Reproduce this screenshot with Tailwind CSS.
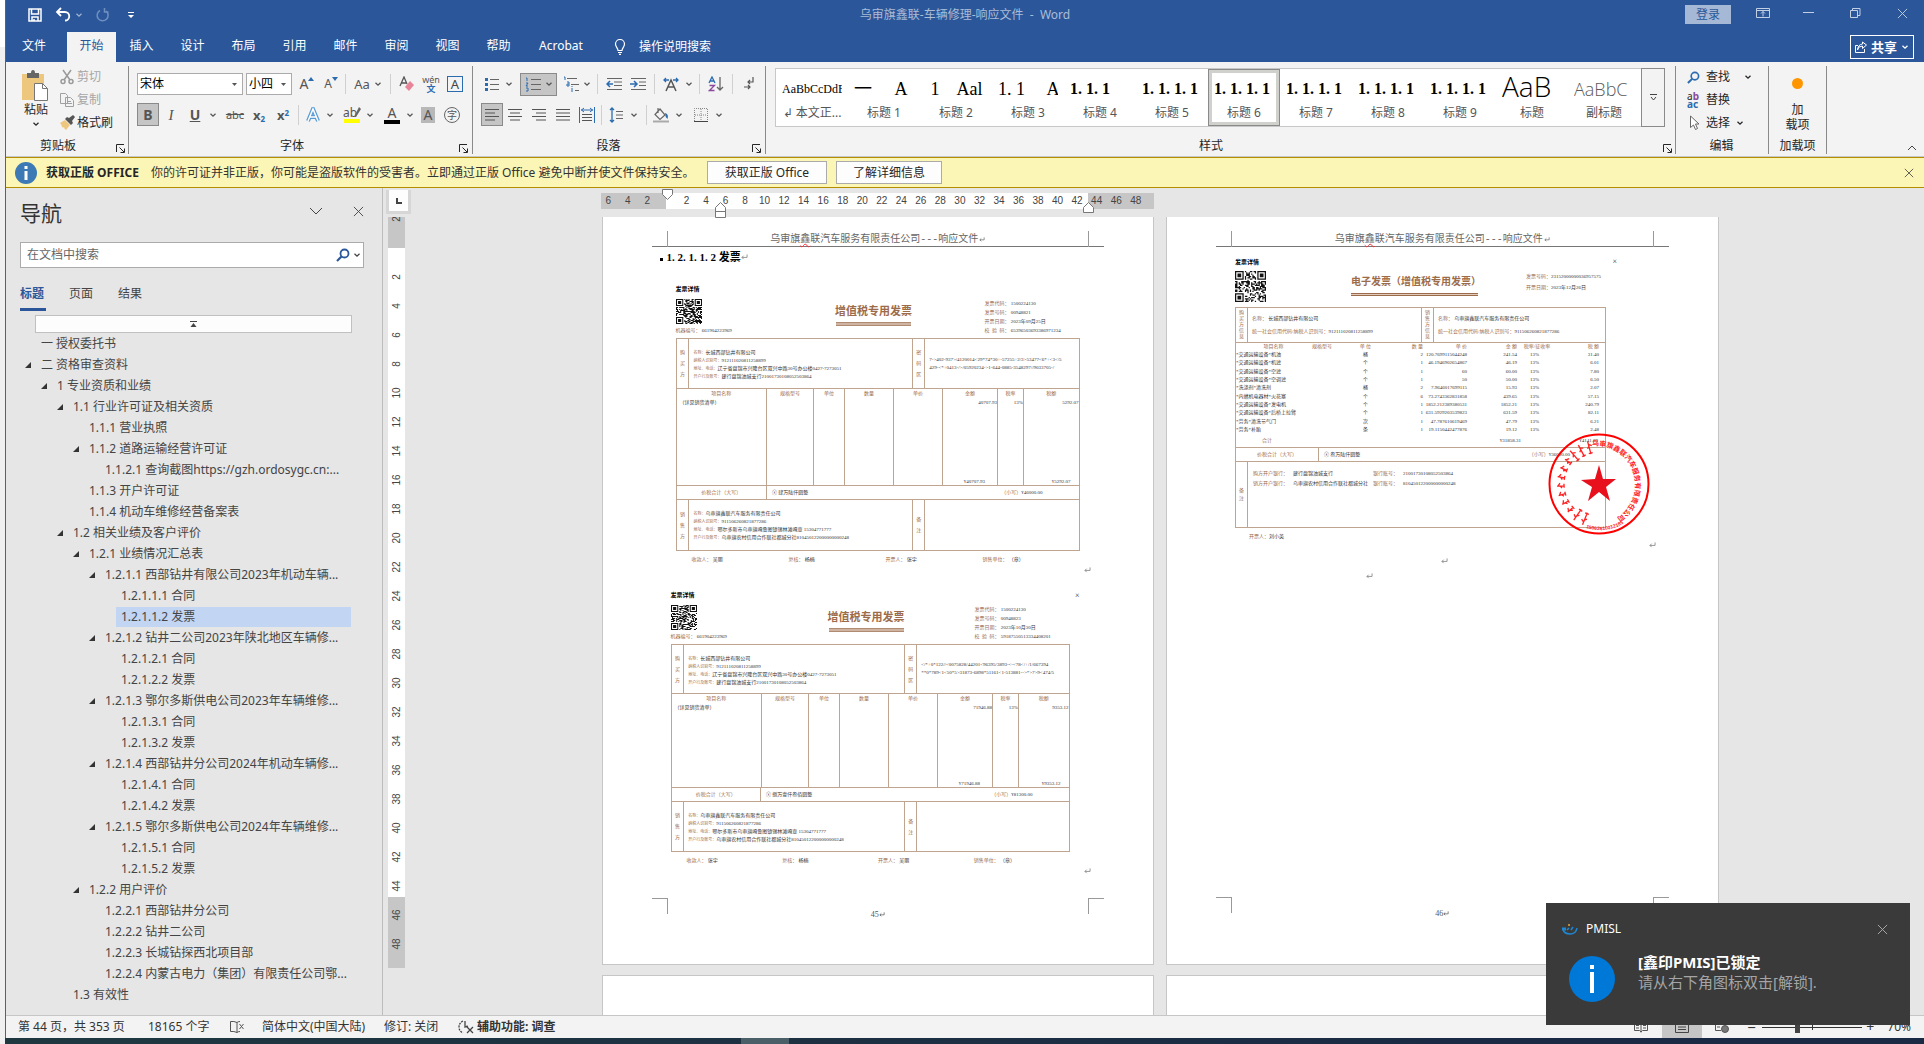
<!DOCTYPE html>
<html lang="zh-CN">
<head>
    <meta charset="UTF-8">
    <meta name="viewport" content="width=device-width, initial-scale=1.0">
    <title>乌审旗鑫联-车辆修理-响应文件 - Word</title>
    <script src="https://cdn.jsdelivr.net/npm/@tailwindcss/browser@4"></script>
</head>
<body class="flex h-screen overflow-hidden bg-[#f0f0f0] font-['Noto_Sans','Noto_Sans_CJK_SC',sans-serif] text-[12px] leading-4 text-[#262626]">

    <!-- shared icons -->
    <svg class="hidden">
        <symbol id="caret" viewBox="0 0 8 8"><path d="M1.5 2.8 4 5.2 6.500 2.800" fill="none" stroke="currentColor" stroke-width="1.3"/></symbol>
        <symbol id="close" viewBox="0 0 12 12"><path d="M1 1 11 11M11 1 1 11" fill="none" stroke="currentColor" stroke-width="1"/></symbol>
        <symbol id="launcher" viewBox="0 0 9 9"><path d="M.5 8V.5H8M3.500 3.500 8 8M8.500 4.500V8.500H4.500" fill="none" stroke="currentColor"/></symbol>
        <symbol id="search" viewBox="0 0 14 14"><path d="M5.500 8.500 1 13" stroke="currentColor" stroke-width="2.200"/><circle cx="8.500" cy="5.500" r="4" fill="none" stroke="currentColor" stroke-width="1.800"/></symbol>
        <symbol id="pmark" viewBox="0 0 8 7"><path d="M7 .5V4H1M3 2 1 4 3 6" fill="none" stroke="currentColor" stroke-width="1"/></symbol>
    </svg>

    <div class="w-[5px] shrink-0 border-t-[47px] border-white bg-[#f0f0f0]"></div>

    <div class="flex min-w-0 flex-1 flex-col">
        <div class="flex min-h-0 flex-1 flex-col border-l border-[#3f6a80]">

        <!-- title bar -->
        <header class="shrink-0 bg-[#2b579a] text-white">
            <div class="grid h-8 grid-cols-3 items-start">
                <div class="flex items-center pt-[7px] pl-[21px]">
                    <button aria-label="保存"><svg class="h-4 w-4" viewBox="0 0 16 16" fill="none" stroke="#fff" stroke-width="1.500"><path d="M2 2h12v12H2zM4.500 2v5h7V2M5 14v-4h6v4M7 12v2"/></svg></button>
                    <button aria-label="撤消" class="ml-3"><svg class="h-4 w-4" viewBox="0 0 16 16" fill="none" stroke="#fff" stroke-width="1.800"><path d="M6 1 2 5l4 4M2 5h8a4 4 0 0 1 0 8.500"/></svg></button>
                    <svg class="ml-1 h-2 w-2 text-[#9db3d4]"><use href="#caret"/></svg>
                    <button aria-label="恢复" class="ml-3"><svg class="h-4 w-4" viewBox="0 0 16 16" fill="none" stroke="#6f8fc0" stroke-width="1.500"><path d="M9.500 1v4h4M11 4A5.500 5.500 0 1 1 5 3.500"/></svg></button>
                    <svg class="ml-4 h-2 w-2" viewBox="0 0 8 8"><path d="M1 1h6v1H1zM1 4h6L4 7z" fill="#fff"/></svg>
                </div>
                <div class="pt-[7px] text-center text-[#aabcd7]">乌审旗鑫联-车辆修理-响应文件&nbsp; -&nbsp; Word</div>
                <div class="flex items-start justify-end pt-[5px] text-[#c3d0e4]">
                    <button class="mr-[25px] h-[19px] w-[46px] bg-[#a5b8d5] text-[#2b579a]">登录</button>
                    <button aria-label="功能区显示选项" class="mr-[33px]"><svg class="h-4 w-[14px]" viewBox="0 0 14 16" fill="none" stroke="currentColor"><path d="M.5 3.500h13v9H.5zM.5 5.500h13M7 11.500v-5M5 8.500l2-2 2 2"/></svg></button>
                    <button aria-label="最小化" class="mr-9"><svg class="h-4 w-[11px]" viewBox="0 0 11 16"><path d="M0 7.500h11" stroke="currentColor"/></svg></button>
                    <button aria-label="还原" class="mr-9"><svg class="h-4 w-[11px]" viewBox="0 0 11 16" fill="none" stroke="currentColor"><path d="M.5 5.500h7v7h-7zM2.500 5.500v-2H10v7H8"/></svg></button>
                    <button aria-label="关闭" class="mt-[3px] mr-4"><svg class="h-[11px] w-[11px]"><use href="#close"/></svg></button>
                </div>
            </div>
            <nav class="flex h-[30px] items-stretch leading-[28px]">
                <a href="#" class="w-[61px] pl-4">文件</a>
                <a href="#" class="w-[49px] bg-[#f3f3f3] text-center text-[#2b579a]">开始</a>
                <a href="#" class="w-[51px] text-center">插入</a>
                <a href="#" class="w-[51px] text-center">设计</a>
                <a href="#" class="w-[51px] text-center">布局</a>
                <a href="#" class="w-[51px] text-center">引用</a>
                <a href="#" class="w-[51px] text-center">邮件</a>
                <a href="#" class="w-[51px] text-center">审阅</a>
                <a href="#" class="w-[51px] text-center">视图</a>
                <a href="#" class="w-[51px] text-center">帮助</a>
                <a href="#" class="w-[74px] text-center">Acrobat</a>
                <a href="#" class="flex items-center pl-4">
                    <svg class="mr-[13px] h-4 w-3" viewBox="0 0 12 16" fill="none" stroke="#fff" stroke-width="1.200"><path d="M4 11.500C4 9 1.500 8 1.500 5a4.500 4.500 0 0 1 9 0C10.500 8 8 9 8 11.500zM4 13.500h4M5 15.300h2"/></svg>
                    操作说明搜索
                </a>
                <button class="mt-[3px] mr-[10px] mb-[3px] ml-auto flex w-16 items-center justify-center gap-1 border border-white text-[13px] font-bold">
                    <svg class="h-3 w-3" viewBox="0 0 12 12" fill="none" stroke="#fff"><path d="M3 4.500H.5v7h9V8M2.500 9Q3 5 7.500 5V7.500L11.500 4 7.500 1V3Q3 3.500 2.500 9"/></svg>
                    共享
                    <svg class="h-2 w-2"><use href="#caret"/></svg>
                </button>
            </nav>
        </header>

        <!-- ribbon -->
        <div class="flex h-[95px] shrink-0 border-b border-[#c8c8c8] bg-[#f3f3f3] pt-1 pb-[2px]">
            <section class="flex w-[123px] flex-col border-r border-[#8a8a8a]">
                <div class="flex flex-1">
                    <button class="flex w-12 flex-col items-center pl-3">
                        <svg class="mt-1 h-8 w-8" viewBox="0 0 32 32"><path d="M2 4h22v26H2z" fill="#edc77e"/><path d="M7 8V3h4q0-3 2-3t2 3h4v5z" fill="#666"/><path d="M14.500 13.500h8l5 5v12h-13z" fill="#fff" stroke="#777"/><path d="M22.500 13.500v5h5" fill="none" stroke="#777"/></svg>
                        <span class="whitespace-nowrap">粘贴</span>
                        <svg class="mt-[2px] h-2 w-2"><use href="#caret"/></svg>
                    </button>
                    <div class="flex flex-col gap-[7px] pt-[3px] pl-[5px]">
                        <button class="flex h-4 items-center gap-[2px] text-[#a6a6a6]"><svg class="h-4 w-4" viewBox="0 0 16 16" fill="none" stroke="#9a9a9a" stroke-width="1.500"><path d="M4 1 11 11M12 1 5 11"/><circle cx="4" cy="12.500" r="2"/><circle cx="12" cy="12.500" r="2"/></svg>剪切</button>
                        <button class="flex h-4 items-center gap-[2px] text-[#a6a6a6]"><svg class="h-4 w-4" viewBox="0 0 16 16" fill="#f3f3f3" stroke="#a0a0a0"><path d="M1.500 1.500h5l2 2v8h-7zM6.500 5.500h5l3 3v6h-8zM8 9.500h4M8 11.500h5"/></svg>复制</button>
                        <button class="flex h-4 items-center gap-[2px]"><svg class="h-4 w-4" viewBox="0 0 16 16"><path d="M1 8 6 5l5 5-4 5q-2-1-2-3-1 1-2 0 0-2-2-4" fill="#edc77e"/><path d="M6 4 8 2l2 1 4-3 2 2-3 4 1 2-2 2z" fill="#555"/></svg>格式刷</button>
                    </div>
                </div>
                <div class="flex items-center justify-between pr-[3px] pl-[34px]"><span>剪贴板</span><svg class="mt-1 h-[9px] w-[9px]"><use href="#launcher"/></svg></div>
            </section>

            <section class="flex w-[344px] flex-col border-r border-[#8a8a8a] pl-2">
                <div class="mt-[7px] flex h-[22px] items-center text-[14px] text-[#555]">
                    <label class="relative mr-[3px] flex h-[22px] w-[106px] items-center border border-[#ababab] bg-white"><select aria-label="字体" class="h-full w-full appearance-none pl-[2px] text-[12px] text-black"><option>宋体</option></select><svg class="absolute right-1 h-[5px] w-[7px]" viewBox="0 0 7 5"><path d="M1 1h5L3.500 4z" fill="#555"/></svg></label>
                    <label class="relative mr-[3px] flex h-[22px] w-[46px] items-center border border-[#ababab] bg-white"><select aria-label="字号" class="h-full w-full appearance-none pl-[2px] text-[12px] text-black"><option>小四</option></select><svg class="absolute right-1 h-[5px] w-[7px]" viewBox="0 0 7 5"><path d="M1 1h5L3.500 4z" fill="#555"/></svg></label>
                    <button class="flex w-6 justify-center">A<svg class="h-[6px] w-[6px]" viewBox="0 0 6 6"><path d="M0 5 3 1l3 4z" fill="#2b6cb0"/></svg></button>
                    <button class="flex w-6 justify-center text-[12px]">A<svg class="h-[6px] w-[6px]" viewBox="0 0 6 6"><path d="M0 1h6L3 5z" fill="#2b6cb0"/></svg></button>
                    <i class="mx-[2px] h-5 w-px bg-[#d0d0d0]"></i>
                    <button class="flex w-10 items-center justify-center gap-1 text-[13px]">Aa<svg class="h-2 w-2"><use href="#caret"/></svg></button>
                    <i class="mx-[2px] h-5 w-px bg-[#d0d0d0]"></i>
                    <button aria-label="清除格式" class="ml-[2px] flex w-6 justify-center"><svg class="h-4 w-4" viewBox="0 0 16 16"><path d="M1 10 5 1l3 7M2.500 7H7" fill="none" stroke="#555" stroke-width="1.300"/><path d="M6 11 11 5l4 4-5 6z" fill="#e8849a"/></svg></button>
                    <button class="flex w-6 flex-col items-center text-[9px] leading-[9px]"><span>wén</span><span class="font-bold text-[#2b6cb0]">文</span></button>
                    <button class="flex w-6 justify-center"><span class="h-4 w-4 border border-[#2b6cb0] text-center text-[13px] leading-[14px] text-[#444]">A</span></button>
                </div>
                <div class="mt-2 flex h-[23px] items-center text-[14px] text-[#555]">
                    <button class="h-[23px] w-[22px] border border-[#8a8a8a] bg-[#c5c5c5] font-bold">B</button>
                    <button class="w-6 font-['Liberation_Serif'] text-[15px] italic">I</button>
                    <button class="w-6 font-bold underline">U</button>
                    <svg class="mr-1 h-2 w-3"><use href="#caret"/></svg>
                    <button class="w-6 text-[11px] line-through">abc</button>
                    <button class="w-6 text-[13px] font-bold">x<sub class="text-[8px] text-[#2b6cb0]">2</sub></button>
                    <button class="w-6 text-[13px] font-bold">x<sup class="text-[8px] text-[#2b6cb0]">2</sup></button>
                    <i class="mx-[3px] h-5 w-px bg-[#d0d0d0]"></i>
                    <button aria-label="文本效果" class="flex w-[22px] justify-center"><svg class="h-4 w-[14px]" viewBox="0 0 14 16"><path d="M2 14 7 2l5 12M4 10h6" fill="none" stroke="#5b9bd5" stroke-width="4"/><path d="M2 14 7 2l5 12M4 10h6" fill="none" stroke="#fff" stroke-width="1.500"/></svg></button>
                    <svg class="mr-1 h-2 w-3"><use href="#caret"/></svg>
                    <button aria-label="突出显示" class="flex w-6 flex-col items-center text-[12px] leading-[13px]"><span class="flex">ab<svg class="-ml-1 h-3 w-2" viewBox="0 0 8 12"><path d="M6 1 8 3 3 11H1z" fill="#666"/></svg></span><span class="h-1 w-4 bg-[#ff0]"></span></button>
                    <svg class="mr-1 h-2 w-3"><use href="#caret"/></svg>
                    <button aria-label="字体颜色" class="flex w-6 flex-col items-center text-[14px] leading-[14px]">A<span class="h-1 w-4 bg-black"></span></button>
                    <svg class="h-2 w-3"><use href="#caret"/></svg>
                    <button class="flex w-6 justify-center"><span class="h-4 w-[14px] bg-[#b8b8b8] text-center leading-4">A</span></button>
                    <button class="flex w-6 justify-center"><span class="h-4 w-4 rounded-full border border-[#666] text-center text-[10px] leading-[14px]">字</span></button>
                </div>
                <div class="mt-auto flex items-center pr-1"><span class="flex-1 pr-3 text-center">字体</span><svg class="mt-1 h-[9px] w-[9px]"><use href="#launcher"/></svg></div>
            </section>

            <section class="flex w-[293px] flex-col border-r border-[#8a8a8a] pl-2">
                <div class="mt-[7px] flex h-[22px] items-center text-[#555]">
                    <button aria-label="项目符号" class="flex w-[21px] justify-center"><svg class="h-4 w-[14px]" viewBox="0 0 14 16"><path d="M5 3.500h9M5 8.500h9M5 13.500h9" stroke="#666"/><path d="M0 2h3v3H0zM0 7h3v3H0zM0 12h3v3H0z" fill="#2b6cb0"/></svg></button>
                    <svg class="mr-1 h-2 w-[14px]"><use href="#caret"/></svg>
                    <button aria-label="编号" class="flex h-[23px] w-[37px] items-center justify-center gap-1 border border-[#8a8a8a] bg-[#c5c5c5]"><svg class="h-4 w-4" viewBox="0 0 16 16"><path d="M6 3.500h10M6 8.500h10M6 13.500h10" stroke="#666"/><path d="M1 2h1v3M1 7h2L1 10h2M1 12h2v3H1" fill="none" stroke="#2b6cb0"/></svg><svg class="h-2 w-2"><use href="#caret"/></svg></button>
                    <button aria-label="多级列表" class="ml-1 flex w-5 justify-center"><svg class="h-4 w-4" viewBox="0 0 16 16"><path d="M4 2.500h10M8 8.500h8M12 14.500h4" stroke="#666"/><path d="M1 1h1v3M4 6h2v4H4V8h2M9 10v1M9 12v4" fill="none" stroke="#2b6cb0"/></svg></button>
                    <svg class="h-2 w-3"><use href="#caret"/></svg>
                    <i class="mx-1 h-5 w-px bg-[#d0d0d0]"></i>
                    <button aria-label="减少缩进" class="flex w-6 justify-center"><svg class="h-[14px] w-4" viewBox="0 0 16 14"><path d="M1 1.500h15M8 5h8M8 8.500h8M1 12.500h15" stroke="#666"/><path d="M7 7H1M4 4 1 7l3 3" fill="none" stroke="#2b6cb0" stroke-width="1.500"/></svg></button>
                    <button aria-label="增加缩进" class="flex w-6 justify-center"><svg class="h-[14px] w-4" viewBox="0 0 16 14"><path d="M1 1.500h15M9 5h7M9 8.500h7M1 12.500h15" stroke="#666"/><path d="M0 7h6M4 4l3 3-3 3" fill="none" stroke="#2b6cb0" stroke-width="1.500"/></svg></button>
                    <i class="mx-1 h-5 w-px bg-[#d0d0d0]"></i>
                    <button aria-label="中文版式" class="flex w-6 justify-center"><svg class="h-4 w-4" viewBox="0 0 16 16"><path d="M3 15 8 4l5 11M5 11h6" fill="none" stroke="#555" stroke-width="1.500"/><path d="M6 4H1M3 2 1 4l2 2M10 4h5M13 2l2 2-2 2" fill="none" stroke="#2b6cb0" stroke-width="1.300"/></svg></button>
                    <svg class="h-2 w-3"><use href="#caret"/></svg>
                    <i class="mx-1 h-5 w-px bg-[#d0d0d0]"></i>
                    <button aria-label="排序" class="flex w-6 justify-center"><svg class="h-4 w-4" viewBox="0 0 16 16" fill="none" stroke-width="1.300"><path d="M1 7 4 1l3 6M2 5h4" stroke="#2b6cb0"/><path d="M1.500 9.500h5l-5 5h5" stroke="#8a4a9e"/><path d="M12 1v13M9 11l3 3 3-3" stroke="#666"/></svg></button>
                    <i class="mx-1 h-5 w-px bg-[#d0d0d0]"></i>
                    <button aria-label="显示编辑标记" class="flex w-6 justify-center"><svg class="h-4 w-3" viewBox="0 0 12 16" fill="none" stroke="#555" stroke-width="1.200"><path d="M10 1v5H5M7 4 5 6l2 2M1 11h6M5 9l2 2-2 2"/></svg></button>
                </div>
                <div class="mt-2 flex h-[23px] items-center text-[#555]">
                    <button aria-label="左对齐" class="flex h-[23px] w-[22px] items-center justify-center border border-[#8a8a8a] bg-[#c5c5c5]"><svg class="h-3 w-[14px]" viewBox="0 0 14 12"><path d="M0 .5h14M0 4h10M0 7.500h14M0 11h10" stroke="#555"/></svg></button>
                    <button aria-label="居中" class="flex w-6 justify-center"><svg class="h-3 w-[14px]" viewBox="0 0 14 12"><path d="M0 .5h14M2 4h10M0 7.500h14M2 11h10" stroke="#555"/></svg></button>
                    <button aria-label="右对齐" class="flex w-6 justify-center"><svg class="h-3 w-[14px]" viewBox="0 0 14 12"><path d="M0 .5h14M4 4h10M0 7.500h14M4 11h10" stroke="#555"/></svg></button>
                    <button aria-label="两端对齐" class="flex w-6 justify-center"><svg class="h-3 w-[14px]" viewBox="0 0 14 12"><path d="M0 .5h14M0 4h14M0 7.500h14M0 11h14" stroke="#555"/></svg></button>
                    <button aria-label="分散对齐" class="flex w-6 justify-center"><svg class="h-4 w-4" viewBox="0 0 16 16" fill="none"><path d="M.5 0v16M15.500 0v16M2 3h12M5 1 2.500 3 5 5M11 1l2.500 2L11 5" stroke="#2b6cb0"/><path d="M3 7.500h10M3 10.500h10M3 13.500h10" stroke="#555"/></svg></button>
                    <i class="mx-[2px] h-5 w-px bg-[#d0d0d0]"></i>
                    <button aria-label="行距" class="flex w-6 justify-center"><svg class="h-4 w-[14px]" viewBox="0 0 14 16" fill="none"><path d="M3 1v14M1 3l2-2 2 2M1 13l2 2 2-2" stroke="#2b6cb0" stroke-width="1.300"/><path d="M7 4.500h7M7 8h7M7 11.500h7" stroke="#666"/></svg></button>
                    <svg class="mr-1 h-2 w-3"><use href="#caret"/></svg>
                    <i class="mx-[2px] h-5 w-px bg-[#d0d0d0]"></i>
                    <button aria-label="底纹" class="flex w-6 justify-center"><svg class="h-4 w-4" viewBox="0 0 16 16" fill="none"><path d="M7 2 12 8l-5 4.500-5-5zM5 1v5" stroke="#666" stroke-width="1.200"/><path d="M12 6q4 1 2.500 6Q12 10 12 6" fill="#2b6cb0"/><path d="M0 14.500h16" stroke="#aaa" stroke-width="2"/></svg></button>
                    <svg class="mr-1 h-2 w-3"><use href="#caret"/></svg>
                    <button aria-label="边框" class="flex w-6 justify-center"><svg class="h-[14px] w-[14px]" viewBox="0 0 14 14" fill="none"><path d="M.5 13V.5h13V13M7 1v12M1 7h12" stroke="#888" stroke-dasharray="1 1"/><path d="M0 13.500h14" stroke="#444"/></svg></button>
                    <svg class="h-2 w-3"><use href="#caret"/></svg>
                </div>
                <div class="mt-auto flex items-center pr-1"><span class="flex-1 pr-4 text-center">段落</span><svg class="mt-1 h-[9px] w-[9px]"><use href="#launcher"/></svg></div>
            </section>

            <section class="flex min-w-0 flex-1 flex-col border-r border-[#8a8a8a] pl-[9px]">
                <div class="mt-[2px] flex h-[59px] w-[890px] border border-[#c8c8c8] bg-white text-black">
                    <div id="gallery" class="flex flex-1 overflow-hidden"></div>
                    <button aria-label="更多样式" class="-m-px flex w-6 items-center justify-center border border-[#8a8a8a] bg-[#f3f3f3]"><svg class="h-[7px] w-[7px]" viewBox="0 0 7 7"><path d="M0 .5h7M1 3l2.500 3L6 3" fill="none" stroke="#444"/></svg></button>
                </div>
                <div class="mt-auto flex items-center pr-[3px]"><span class="flex-1 pr-4 text-center">样式</span><svg class="mt-1 h-[9px] w-[9px]"><use href="#launcher"/></svg></div>
            </section>

            <section class="flex w-[93px] flex-col border-r border-[#8a8a8a] pl-[11px]">
                <button class="mt-[3px] flex h-4 items-center gap-[6px]"><svg class="h-[13px] w-[13px] text-[#2b6cb0]"><use href="#search"/></svg>查找<svg class="ml-2 h-2 w-2"><use href="#caret"/></svg></button>
                <button class="mt-[7px] flex h-4 items-center gap-[5px]"><span class="w-[14px] text-left text-[10px] leading-[8px]">a<b class="text-[#8a4a9e]">b</b><br><b class="text-[#2b6cb0]">ac</b></span>替换</button>
                <button class="mt-[7px] flex h-4 items-center gap-[6px]"><svg class="h-4 w-[13px]" viewBox="0 0 13 16"><path d="M3.500 1v11.500l3-2.500 2 4.500 2-1-2-4.500H12z" fill="#fff" stroke="#666"/></svg>选择<svg class="h-2 w-2"><use href="#caret"/></svg></button>
                <div class="mt-auto pr-3 text-center">编辑</div>
            </section>
            <section class="flex w-[58px] flex-col items-center border-r border-[#8a8a8a]">
                <button class="flex flex-col items-center"><span class="mt-3 mb-[13px] h-[11px] w-[11px] rounded-full bg-[#ff9500]"></span><span class="w-6 leading-[15px]">加<br>载项</span></button>
                <div class="mt-auto">加载项</div>
            </section>
            <div class="flex w-[97px] items-end justify-end pr-[7px] pb-[3px]"><button aria-label="折叠功能区"><svg class="h-[6px] w-[10px]" viewBox="0 0 10 6"><path d="M1 5 5 1l4 4" fill="none" stroke="#444"/></svg></button></div>
        </div>

        <!-- licence warning -->
        <div class="flex h-[31px] shrink-0 items-center border-y border-[#b38f00] bg-[#fcf6b6] pl-[9px]">
            <svg class="mr-[9px] h-[22px] w-[22px] shrink-0" viewBox="0 0 22 22"><circle cx="11" cy="11" r="11" fill="#3d7ab5"/><path d="M9.500 4h3v3h-3zM9.500 9h3v9h-3z" fill="#fff"/></svg>
            <b class="mr-3 whitespace-nowrap">获取正版 OFFICE</b>
            <span class="mr-4 w-[540px] whitespace-nowrap text-[#333]">你的许可证并非正版，你可能是盗版软件的受害者。立即通过正版 Office 避免中断并使文件保持安全。</span>
            <button class="mr-[9px] h-[23px] w-[120px] border border-[#ababab] bg-[#fdfdfd]">获取正版 Office</button>
            <button class="h-[23px] w-[106px] border border-[#ababab] bg-[#fdfdfd]">了解详细信息</button>
            <button aria-label="关闭" class="mr-[10px] ml-auto"><svg class="h-[10px] w-[10px] text-[#444]"><use href="#close"/></svg></button>
        </div>

        <main class="flex min-h-0 flex-1 bg-[#e6e6e6]">
            <!-- navigation pane -->
            <aside class="w-[377px] shrink-0 border-r border-[#bcbcbc] pl-[14px] text-[#444]">
                <div class="flex h-[54px] items-center pr-[18px] pb-1">
                    <h2 class="flex-1 text-[21px] text-[#333]">导航</h2>
                    <svg class="mr-[30px] mb-1 h-2 w-[14px]" viewBox="0 0 14 8"><path d="M1 1l6 6 6-6" fill="none" stroke="#444"/></svg>
                    <button aria-label="关闭" class="mb-1"><svg class="h-[11px] w-[11px]"><use href="#close"/></svg></button>
                </div>
                <label class="flex h-[26px] w-[344px] items-center border border-[#ababab] bg-white pr-[2px]">
                    <input type="text" aria-label="在文档中搜索" placeholder="在文档中搜索" class="min-w-0 flex-1 pl-[6px] outline-none placeholder:text-[#666]">
                    <svg class="h-[14px] w-[14px] text-[#2b579a]"><use href="#search"/></svg>
                    <svg class="ml-[3px] h-2 w-2"><use href="#caret"/></svg>
                </label>
                <div class="mt-[17px] flex gap-[23px] leading-[18px]">
                    <a href="#" class="h-[26px] w-[26px] border-b-[3px] border-[#2b579a] font-bold whitespace-nowrap text-[#2b579a]">标题</a>
                    <a href="#" class="w-[26px]">页面</a>
                    <a href="#" class="w-[26px]">结果</a>
                </div>
                <button aria-label="跳转到开头" class="mt-1 ml-[15px] flex h-[18px] w-[317px] items-center justify-center border border-[#c0c0c0] bg-[#fdfdfd]"><svg class="h-[6px] w-[7px]" viewBox="0 0 7 6"><path d="M0 0h7v1H0zM3.500 2 6.500 6h-6z" fill="#444"/></svg></button>
                <ul id="outline" class="leading-[21px]"></ul>
            </aside>

            <!-- vertical ruler -->
            <div class="w-[28px] shrink-0 pt-[2px] pl-[3px]">
                <div class="mb-[3px] flex h-6 w-[25px] items-center justify-center border-[3px] border-t-0 border-[#d6d6d6] bg-[#fdfdfd]"><svg class="h-[6px] w-[6px]" viewBox="0 0 6 6"><path d="M1 0v5h5" fill="none" stroke="#444" stroke-width="2"/></svg></div>
                <div id="vruler" class="ml-[2px] flex h-[751px] w-[17px] flex-col overflow-hidden bg-[linear-gradient(#c6c6c6_31px,#fff_31px_680px,#c6c6c6_680px)] font-['Liberation_Sans'] text-[10px] text-[#444]"></div>
            </div>

            <!-- document canvas -->
            <div class="min-w-0 flex-1 overflow-hidden pr-4">
                <div class="mx-auto w-[1118px]">
                    <div class="relative mt-[5px] h-4 w-[553px] overflow-visible bg-[linear-gradient(90deg,#c6c6c6_65px,#fff_65px_487px,#c6c6c6_487px)]">
                        <div id="hruler" class="-ml-[2px] grid w-[547px] grid-cols-28 text-center font-['Liberation_Sans'] text-[10px] text-[#444]"></div>
                        <svg class="absolute -top-1 left-[61px] h-[11px] w-[11px]" viewBox="0 0 11 11"><path d="M.5.5h10v5L5.500 10.500.5 5.500z" fill="#fff" stroke="#777"/></svg>
                        <svg class="absolute top-[9px] left-[114px] h-4 w-[11px]" viewBox="0 0 11 16"><path d="M.5 15.500v-10L5.500.5l5 5v10zM.5 9.500h10" fill="#fff" stroke="#777"/></svg>
                        <svg class="absolute top-[9px] left-[482px] h-[11px] w-[11px]" viewBox="0 0 11 11"><path d="M.5 10.500v-5L5.500.5l5 5v5z" fill="#fff" stroke="#777"/></svg>
                    </div>

                    <div class="mt-2 grid grid-cols-2 gap-x-3 gap-y-[10px] pl-px">
                        <article class="h-[748px] border border-t-0 border-[#c6c6c6] bg-white px-[49px] pt-[14px]">
                            <div class="h-4 border-b border-[#777] px-[15px]"><div class="h-4 border-x border-[#999] text-center font-['Liberation_Mono','Noto_Sans_CJK_SC'] text-[10px] leading-[17px] text-[#666]">乌审旗<span class="underline decoration-red-500 decoration-wavy decoration-1">鑫</span>联汽车服务有限责任公司---响应文件<svg class="ml-px inline h-[5px] w-[6px]"><use href="#pmark"/></svg></div></div>
                            <h3 class="mt-[2px] flex items-center pl-2 font-['Liberation_Serif','Noto_Sans_CJK_SC'] text-[11px] font-bold text-black"><i class="mt-1 mr-1 h-[3px] w-[3px] bg-black"></i><span>1. 2. 1. 1. 2 发票</span><svg class="h-[6px] w-[7px] text-[#888]"><use href="#pmark"/></svg></h3>
                            <div id="inv1" class="mt-[20px] ml-6 w-[404px]"></div>
                            <div class="flex h-[6px] justify-end pr-[13px] text-[#888]"><svg class="h-[6px] w-[7px]"><use href="#pmark"/></svg></div>
                            <div id="inv2" class="mt-[18px] ml-[19px] w-[399px]"></div>
                            <div class="flex h-[6px] justify-end pr-[13px] text-[#888]"><svg class="h-[6px] w-[7px]"><use href="#pmark"/></svg></div>
                            <div class="mt-6 flex h-[21px] justify-between">
                                <i class="h-4 w-[16px] border-t border-r border-[#999]"></i>
                                <span class="flex items-center self-end font-['Liberation_Serif'] text-[8px] leading-[9px] text-[#555]">45<svg class="h-[5px] w-[6px]"><use href="#pmark"/></svg></span>
                                <i class="h-4 w-[16px] border-t border-l border-[#999]"></i>
                            </div>
                        </article>

                        <article class="flex h-[748px] flex-col border border-t-0 border-[#c6c6c6] bg-white px-[49px] pt-[14px]">
                            <div class="h-4 shrink-0 border-b border-[#777] px-[15px]"><div class="h-4 border-x border-[#999] text-center font-['Liberation_Mono','Noto_Sans_CJK_SC'] text-[10px] leading-[17px] text-[#666]">乌审旗<span class="underline decoration-red-500 decoration-wavy decoration-1">鑫</span>联汽车服务有限责任公司---响应文件<svg class="ml-px inline h-[5px] w-[6px]"><use href="#pmark"/></svg></div></div>
                            <div class="relative mt-[11px] ml-[19px] w-[386px] font-['Liberation_Serif','Noto_Sans_CJK_SC'] text-[5px] leading-[8px] text-[#333]">
                                <div class="flex justify-between pr-[4px]"><b class="text-[6px] text-black">发票详情</b><span class="text-[8px]">×</span></div>
                                <div class="flex h-[41px] w-[370px] pt-[5px]">
                                    <svg data-qr="7" class="h-[31px] w-[31px]" viewBox="0 0 25 25"></svg>
                                    <div class="ml-[85px] w-[127px] pt-[5px] text-center text-[#9c6b4a]"><div class="text-[10px] leading-3 font-bold whitespace-nowrap">电子发票（增值税专用发票）</div><div class="mt-[5px] h-[3px] border-y border-[#9c6b4a] bg-[#e0cbbd]"></div></div>
                                    <div class="ml-auto w-[79px] leading-[11px] whitespace-nowrap"><div><span class="text-[#9c6b4a]">发票号码：</span>23152000000036957575</div><div><span class="text-[#9c6b4a]">开票日期：</span>2023年12月26日</div></div>
                                </div>
                                <div class="w-[371px] border border-[#bfa590]">
                                    <div class="flex h-[35px] border-b border-[#bfa590] text-[#9c6b4a]">
                                        <div class="flex w-3 items-center justify-center border-r border-[#bfa590] text-center leading-[6px]"><span class="w-[5px]">购买方信息</span></div>
                                        <div class="flex w-[174px] flex-col justify-center gap-[5px] border-r border-[#bfa590] pl-1"><div>名称： <span class="text-[#333]">长城西部钻井有限公司</span></div><div>统一社会信用代码/纳税人识别号：<span class="text-[#333]">912111020811258899</span></div></div>
                                        <div class="flex w-3 items-center justify-center border-r border-[#bfa590] text-center leading-[6px]"><span class="w-[5px]">销售方信息</span></div>
                                        <div class="flex flex-1 flex-col justify-center gap-[5px] pl-1"><div>名称： <span class="text-[#333]">乌审旗鑫联汽车服务有限责任公司</span></div><div>统一社会信用代码/纳税人识别号：<span class="text-[#333]">911506260821877286</span></div></div>
                                    </div>
                                    <table class="h-[91px] w-full table-fixed">
                                        <colgroup><col class="w-[67px]"><col class="w-[38px]"><col class="w-[49px]"><col class="w-[33px]"><col class="w-[44px]"><col class="w-[50px]"><col class="w-[40px]"><col class="w-[42px]"><col></colgroup>
                                        <thead class="text-[#9c6b4a]"><tr class="whitespace-nowrap"><th class="p-0 pl-2 font-normal">项目名称</th><th class="p-0 font-normal">规格型号</th><th class="p-0 font-normal">单 位</th><th class="p-0 text-right font-normal">数 量</th><th class="p-0 text-right font-normal">单 价</th><th class="p-0 text-right font-normal">金 额</th><th class="p-0 font-normal">税率/征收率</th><th class="p-0 text-right font-normal">税 额</th><th></th></tr></thead>
                                        <tbody id="items"></tbody>
                                    </table>
                                    <div class="flex h-[14px] items-center border-b border-[#bfa590]"><span class="w-[232px] pl-[26px] text-[#9c6b4a]">合计</span><span class="w-[53px] text-right">¥31858.31</span><span class="flex-1 pr-[7px] text-right">¥4141.69</span></div>
                                    <div class="flex h-[14px] items-center border-b border-[#bfa590]"><span class="flex h-full w-[83px] items-center justify-center border-r border-[#bfa590] text-[#9c6b4a]">价税合计（大写）</span><span class="pl-[5px]">ⓧ 叁万陆仟圆整</span><span class="mr-[35px] ml-auto"><span class="text-[#9c6b4a]">（小写）</span>¥36000.00</span></div>
                                    <div class="flex h-[65px]">
                                        <div class="flex w-3 items-center justify-center border-r border-[#bfa590] text-[#9c6b4a]"><span class="w-[5px]">备注</span></div>
                                        <div class="grid h-[19px] grid-cols-[auto_auto_auto_auto] gap-x-[5px] gap-y-[2px] pt-2 pl-[5px] whitespace-nowrap">
                                            <span class="text-[#9c6b4a]">购方开户银行：</span><span>建行盘锦油城支行</span><span class="text-[#9c6b4a]">银行账号：</span><span>21001730108052503864</span>
                                            <span class="text-[#9c6b4a]">销方开户银行：</span><span>乌审旗农村信用合作联社都城分社</span><span class="text-[#9c6b4a]">银行账号：</span><span>810450122000000000248</span>
                                        </div>
                                    </div>
                                </div>
                                <div class="mt-[5px] pl-[14px]"><span class="text-[#9c6b4a]">开票人：</span>刘小英</div>
                                <!-- company seal, laid over the invoice -->
                                <svg class="absolute top-[175px] left-[313px] h-[102px] w-[102px]" viewBox="0 0 102 102">
                                    <circle cx="51" cy="51" r="49.500" fill="none" stroke="#f00" stroke-width="2"/>
                                    <path d="M51 32 55 46 68 46 58 54 62 68 51 59 40 68 44 54 33 47 47 46z" fill="#e8101c"/>
                                    <path id="arcTop" d="M44 13A39 39 0 0 1 67 86" fill="none"/>
                                    <path id="arcLow" d="M38 95A46 46 0 0 0 84 84" fill="none"/>
                                    <text font-size="7" font-weight="bold" fill="#f22"><textPath href="#arcTop">乌审旗鑫联汽车服务有限责任公司</textPath></text>
                                    <text font-size="5" font-weight="bold" fill="#f22" font-family="Liberation Sans"><textPath href="#arcLow">15062610012185</textPath></text>
                                    <g id="script" fill="none" stroke="#f22" stroke-width="1.300"></g>
                                </svg>
                            </div>
                            <div class="flex justify-end pr-[13px] text-[#888]"><svg class="mt-px h-[6px] w-[7px]"><use href="#pmark"/></svg></div>
                            <div class="mt-[10px] flex justify-center pl-1 text-[#888]"><svg class="h-[6px] w-[7px]"><use href="#pmark"/></svg></div>
                            <div class="mt-[9px] pl-[150px] text-[#888]"><svg class="h-[6px] w-[7px]"><use href="#pmark"/></svg></div>
                            <div class="mt-auto mb-[46px] flex h-[21px] justify-between">
                                <i class="h-4 w-[16px] border-t border-r border-[#999]"></i>
                                <span class="flex items-center self-end font-['Liberation_Serif'] text-[8px] leading-[9px] text-[#555]">46<svg class="h-[5px] w-[6px]"><use href="#pmark"/></svg></span>
                                <i class="h-4 w-[16px] border-t border-l border-[#999]"></i>
                            </div>
                        </article>

                        <article class="h-[60px] border border-[#c6c6c6] bg-white"></article>
                        <article class="h-[60px] border border-[#c6c6c6] bg-white"></article>
                    </div>
                </div>
            </div>
        </main>

        <!-- status bar -->
        <footer class="flex h-[23px] shrink-0 items-center border-t border-[#c6c6c6] bg-[#f3f3f3] pl-3 text-[#333]">
            <span class="w-[130px]">第 44 页，共 353 页</span>
            <span class="w-[82px]">18165 个字</span>
            <svg class="mr-[18px] h-3 w-[14px]" viewBox="0 0 14 12" fill="none" stroke="#555"><path d="M7 11.500V1.500Q4 0 .5.500v10Q4 10 7 11.500 8 10.500 10 10.500M7 1.500Q8 .5 10 .5M9.500 3l4 5M13.500 3l-4 5"/></svg>
            <span class="w-[122px]">简体中文(中国大陆)</span>
            <span class="w-[74px]">修订: 关闭</span>
            <svg class="mr-[3px] h-[14px] w-4" viewBox="0 0 16 14" fill="none" stroke="#444" stroke-width="1.300"><path d="M5 1Q1 3 1 7t4 6" stroke-dasharray="2 1"/><path d="M7 1v6l3-1M8 6l7 7M15 7l-6 6"/></svg>
            <span class="font-bold">辅助功能: 调查</span>
            <div class="ml-auto flex h-full items-center pr-[13px]">
                <svg class="mr-[14px] h-3 w-[14px]" viewBox="0 0 14 12" fill="none" stroke="#555"><path d="M7 1v10.500M.5 1.500h5L7 2.500 8.500 1.500h5v8h-5L7 11l-1.500-1.500h-5zM2 4.500h3M2 7h3M9 4.500h3M9 7h3"/></svg>
                <span class="flex h-full w-10 items-center justify-center bg-[#c6c6c6]"><svg class="h-3 w-[14px]" viewBox="0 0 14 12" fill="none" stroke="#444"><path d="M.5.5h13v11H.5zM3 3.500h8M3 6h8M3 8.500h8"/></svg></span>
                <svg class="mr-[18px] ml-[13px] h-3 w-[14px]" viewBox="0 0 14 12" fill="none" stroke="#555"><path d="M6 9.500H.5v-9h9V3M2 3.500h5M2 6h3"/><circle cx="10" cy="8" r="3.500" fill="#777"/></svg>
                <span class="w-[15px] text-[15px]">−</span>
                <span class="relative flex items-center"><input type="range" min="0" max="100" value="34" aria-label="显示比例" class="h-4 w-[100px] appearance-none bg-[linear-gradient(#333,#333)] bg-[length:100%_1px] bg-center bg-no-repeat [&::-webkit-slider-thumb]:h-3 [&::-webkit-slider-thumb]:w-[5px] [&::-webkit-slider-thumb]:appearance-none [&::-webkit-slider-thumb]:bg-[#444]"><i class="absolute left-[50px] h-[6px] w-px bg-[#333]"></i></span>
                <span class="mr-[13px] ml-1 text-[14px]">+</span>
                <span>70%</span>
            </div>
        </footer>
        </div>
        <div class="flex h-[6px] shrink-0 bg-[linear-gradient(90deg,#1f3840,#1a2a44_75%)]"><i class="ml-[736px] w-12 bg-[#4a5f68]"></i></div>
    </div>

    <!-- toast -->
    <div role="alert" class="absolute right-[14px] bottom-[19px] h-[122px] w-[364px] bg-[#3a3a3a] pt-[18px] pr-[22px] pl-4 text-white">
        <div class="flex items-center">
            <svg class="mr-2 h-4 w-4" viewBox="0 0 16 16" fill="none" stroke="#1e88d2"><path d="M1 8q1 5 7 5t7-6M5 9l2-2M9 9l2-3" stroke-width="1.500"/><path d="M0 8h4" stroke-width="3"/><circle cx="7" cy="4" r="1" fill="#e8a33d" stroke="none"/></svg>
            <span class="flex-1">PMISL</span>
            <button aria-label="关闭" class="text-[#b0b0b0]"><svg class="h-[11px] w-[11px]"><use href="#close"/></svg></button>
        </div>
        <div class="mt-[15px] flex pl-[7px]">
            <svg class="mt-1 mr-[23px] h-[46px] w-[46px]" viewBox="0 0 46 46"><circle cx="23" cy="23" r="23" fill="#0078d7"/><path d="M21 9h4v4h-4zM21 16h4v21h-4z" fill="#fff"/></svg>
            <div class="text-[15px] leading-5"><b>[鑫印PMIS]已锁定</b><p class="text-[#a5a5a5]">请从右下角图标双击[解锁].</p></div>
        </div>
    </div>

    <script>
        const byId = (id) => document.getElementById(id);

        // style gallery: [preview, name, preview classes]
        const number = "font-['Liberation_Serif'] text-[16px] font-bold";
        const heading = "font-['Liberation_Serif','Noto_Sans_CJK_SC'] text-[18px]";
        const styles = [
            ['AaBbCcDdE', '↲ 本文正...', "font-['Liberation_Serif'] text-[12px]"],
            ['一　 A', '标题 1', heading],
            [' 1    Aal', '标题 2', heading],
            ['1. 1     A', '标题 3', heading],
            ['1. 1. 1', '标题 4', number],
            ['1. 1. 1. 1', '标题 5', number],
            ['1. 1. 1. 1', '标题 6', number],
            ['1. 1. 1. 1', '标题 7', number],
            ['1. 1. 1. 1', '标题 8', number],
            ['1. 1. 1. 1', '标题 9', number],
            ['AaB', '标题', "font-['Open_Sans'] text-[28px] leading-[20px] font-light"],
            ['AaBbC', '副标题', "font-['Open_Sans'] text-[18px] font-light text-[#5a5a5a]"],
        ];
        byId('gallery').innerHTML = styles.map(([preview, name, cls], i) => `
            <button class="flex w-[72px] shrink-0 flex-col items-center ${i === 6 ? 'border border-[#8a8a8a] ring-[3px] ring-[#d0d0cd] ring-inset' : ''}">
                <span class="${i === 6 ? 'mt-[6px]' : 'mt-[7px]'} flex h-[26px] w-[60px] ${i === 10 ? 'items-start' : 'items-center'} overflow-hidden whitespace-pre ${cls}">${preview}</span>
                <span class="mt-[3px] text-[12px] leading-4 whitespace-nowrap text-[#555]">${name}</span>
            </button>`).join('');

        // outline: [level, has children, text]
        const outline = [
            [0, 0, '一 授权委托书'],
            [0, 1, '二 资格审查资料'],
            [1, 1, '1 专业资质和业绩'],
            [2, 1, '1.1 行业许可证及相关资质'],
            [3, 0, '1.1.1 营业执照'],
            [3, 1, '1.1.2 道路运输经营许可证'],
            [4, 0, '1.1.2.1 查询截图https://gzh.ordosygc.cn:...'],
            [3, 0, '1.1.3 开户许可证'],
            [3, 0, '1.1.4 机动车维修经营备案表'],
            [2, 1, '1.2 相关业绩及客户评价'],
            [3, 1, '1.2.1 业绩情况汇总表'],
            [4, 1, '1.2.1.1 西部钻井有限公司2023年机动车辆...'],
            [5, 0, '1.2.1.1.1 合同'],
            [5, 0, '1.2.1.1.2 发票'],
            [4, 1, '1.2.1.2 钻井二公司2023年陕北地区车辆修...'],
            [5, 0, '1.2.1.2.1 合同'],
            [5, 0, '1.2.1.2.2 发票'],
            [4, 1, '1.2.1.3 鄂尔多斯供电公司2023年车辆维修...'],
            [5, 0, '1.2.1.3.1 合同'],
            [5, 0, '1.2.1.3.2 发票'],
            [4, 1, '1.2.1.4 西部钻井分公司2024年机动车辆修...'],
            [5, 0, '1.2.1.4.1 合同'],
            [5, 0, '1.2.1.4.2 发票'],
            [4, 1, '1.2.1.5 鄂尔多斯供电公司2024年车辆维修...'],
            [5, 0, '1.2.1.5.1 合同'],
            [5, 0, '1.2.1.5.2 发票'],
            [3, 1, '1.2.2 用户评价'],
            [4, 0, '1.2.2.1 西部钻井分公司'],
            [4, 0, '1.2.2.2 钻井二公司'],
            [4, 0, '1.2.2.3 长城钻探西北项目部'],
            [4, 0, '1.2.2.4 内蒙古电力（集团）有限责任公司鄂...'],
            [2, 0, '1.3 有效性'],
        ];
        const indents = ['pl-0', 'pl-4', 'pl-8', 'pl-12', 'pl-16', 'pl-20'];
        byId('outline').innerHTML = outline.map(([level, open, text], i) => `
            <li class="flex h-[21px] w-[331px] items-center ${indents[level]}">
                <svg class="mx-[5px] h-[6px] w-[6px] shrink-0" viewBox="0 0 6 6">${open ? '<path d="M6 0v6H0z" fill="#333"/>' : ''}</svg>
                <a href="#" class="h-5 flex-1 pl-[5px] leading-[19px] whitespace-nowrap ${i === 13 ? 'bg-[#c2d5f2]' : ''}">${text}</a>
            </li>`).join('');

        // rulers
        let ticks = '';
        for (let n = -6; n <= 48; n += 2) ticks += `<span>${n ? Math.abs(n) : ''}</span>`;
        byId('hruler').innerHTML = ticks;
        ticks = '';
        for (let n = -2; n <= 48; n += 2) ticks += `<span class="flex h-[29px] shrink-0 items-center justify-center first:-mt-[13px]"><span class="-rotate-90">${n ? Math.abs(n) : ''}</span></span>`;
        byId('vruler').innerHTML = ticks;

        // VAT invoices
        const party = (rows) => rows.map(([label, value]) => `<div class="flex"><span class="text-[4px] text-[#9c6b4a]">${label}</span><span>${value}</span></div>`).join('');
        const side = (text) => `<div class="flex items-center justify-center border-r border-[#bfa590] text-[#9c6b4a]"><span class="w-[5px] leading-[11px] whitespace-normal">${text}</span></div>`;
        const invoice = (d) => `
            <div class="font-['Liberation_Serif','Noto_Sans_CJK_SC'] text-[5px] leading-[7px] whitespace-nowrap text-[#333]">
                <div class="flex items-center justify-between"><b class="text-[6px] leading-[8px] text-black">发票详情</b><span class="-mr-[10px] text-[8px]">${d.close}</span></div>
                <div class="flex h-[45px] justify-between pt-[6px]">
                    <div class="w-[120px]"><svg data-qr="${d.seed}" class="h-[25px] w-[26px]" viewBox="0 0 25 25" preserveAspectRatio="none"></svg><div class="mt-[3px]"><span class="text-[#9c6b4a]">机器编号：</span> 661904223969</div></div>
                    <div class="w-[75px] pt-[6px] text-center text-[#9c6b4a]"><div class="-mx-1 text-[11px] leading-[13px] font-bold">增值税专用发票</div><div class="mt-1 h-[4px] border-y border-[#b08a72] bg-[#d0b4a2]"></div></div>
                    <div class="w-[128px] pl-[33px] leading-[9px]">
                        <div><span class="text-[#9c6b4a]">发票代码：</span> 1500224130</div>
                        <div><span class="text-[#9c6b4a]">发票号码：</span> ${d.number}</div>
                        <div><span class="text-[#9c6b4a]">开票日期：</span> ${d.date}</div>
                        <div><span class="text-[#9c6b4a]">校 &nbsp;验 &nbsp;码：</span> ${d.check}</div>
                    </div>
                </div>
                <div class="border border-[#bfa590]">
                    <div class="grid ${d.partyHeight} grid-cols-[13fr_225fr_12fr_154fr] border-b border-[#bfa590]">
                        ${side('购买方')}
                        <div class="border-r border-[#bfa590] pt-[10px] pl-1 leading-[8px]">${party([['名称：', '长城西部钻井有限公司'], ['纳税人识别号：', '912111020811258899'], ['地址、电话：', '辽宁省盘锦市兴隆台区双兴中路30号办公楼0427-7273051'], ['开户行及账号：', '建行盘锦油城支行21001730108052503864']])}</div>
                        ${side('密码区')}
                        <div class="flex flex-col justify-center pl-1 leading-[8px]"><div>${d.code1}</div><div>${d.code2}</div></div>
                    </div>
                    <table class="${d.itemsHeight} w-full table-fixed border-b border-[#bfa590]">
                        <colgroup><col class="w-[90px]"><col class="w-[47px]"><col class="w-[31px]"><col class="w-[49px]"><col class="w-[49px]"><col class="w-[55px]"><col class="w-[26px]"><col></colgroup>
                        <tr class="h-[8px] divide-x divide-[#bfa590] text-[#9c6b4a]"><th class="p-0 font-normal">项目名称</th><th class="p-0 font-normal">规格型号</th><th class="p-0 font-normal">单位</th><th class="p-0 font-normal">数量</th><th class="p-0 font-normal">单价</th><th class="p-0 font-normal">金额</th><th class="p-0 font-normal">税率</th><th class="p-0 font-normal">税额</th></tr>
                        <tr class="h-[10px] divide-x divide-[#bfa590]"><td class="p-0 pl-[3px]">（详见销货清单）</td><td></td><td></td><td></td><td></td><td class="p-0 text-right">${d.amount}</td><td class="p-0 text-right">13%</td><td class="p-0 text-right">${d.tax}</td></tr>
                        <tr class="divide-x divide-[#bfa590] align-bottom"><td></td><td></td><td></td><td></td><td></td><td class="p-0 pr-3 text-right">¥${d.amount}</td><td></td><td class="p-0 pr-2 text-right">¥${d.tax}</td></tr>
                    </table>
                    <div class="grid h-[14px] grid-cols-[91fr_313fr] items-center border-b border-[#bfa590]">
                        <span class="flex h-full items-center justify-center border-r border-[#bfa590] text-[#9c6b4a]">价税合计（大写）</span>
                        <span class="flex justify-between pr-9 pl-[5px]"><span>ⓧ ${d.words}</span><span><span class="text-[#9c6b4a]">（小写）</span>¥${d.total}</span></span>
                    </div>
                    <div class="grid ${d.partyHeight} grid-cols-[13fr_225fr_12fr_154fr]">
                        ${side('销售方')}
                        <div class="border-r border-[#bfa590] pt-[10px] pl-1 leading-[8px]">${party([['名称：', '乌审旗鑫联汽车服务有限责任公司'], ['纳税人识别号：', '911506260821877286'], ['地址、电话：', '鄂尔多斯市乌审旗嘎鲁图镇锡林滩嘎查 15304771777'], ['开户行及账号：', '乌审旗农村信用合作联社都城分社810450122000000000248']])}</div>
                        ${side('备注')}
                        <div></div>
                    </div>
                </div>
                <div class="grid h-[16px] grid-cols-4 items-center pl-4">${d.people.map(([label, value]) => `<span><span class="text-[#9c6b4a]">${label}：</span> ${value}</span>`).join('')}</div>
            </div>`;
        byId('inv1').innerHTML = invoice({
            seed: 3, close: '', number: '00948821', date: '2023年09月25日', check: '65396503693386971234',
            partyHeight: 'h-[50px]', itemsHeight: 'h-[97px]',
            code1: '7-&gt;402-937&gt;/4120014&lt;29*74*30+-57255+2/3&gt;53477&lt;6*+&lt;3&lt;/5', code2: '429-&lt;*+0413-/&gt;/05920234-&gt;1-644-0885-3548297//9033705-/',
            amount: '40707.93', tax: '5292.07', words: '肆万陆仟圆整', total: '46000.00',
            people: [['收款人', '吴丽'], ['复核', '杨楠'], ['开票人', '张宇'], ['销售单位', '（章）']],
        });
        byId('inv2').innerHTML = invoice({
            seed: 5, close: '×', number: '00948823', date: '2023年10月30日', check: '59187550513334408201',
            partyHeight: 'h-[49px]', itemsHeight: 'h-[94px]',
            code1: '&lt;/*+0*122//&lt;0075828/44201&lt;96395/3893-&lt;-&lt;78&lt;/+/1/667394', code2: '**0*789&lt;1&lt;50*5&gt;31873-6898*51161&lt;1-513881--&gt;*&gt;7&gt;9&lt;474/5',
            amount: '71946.88', tax: '9353.12', words: '捌万壹仟叁佰圆整', total: '81300.00',
            people: [['收款人', '张宇'], ['复核', '杨楠'], ['开票人', '吴丽'], ['销售单位', '（章）']],
        });

        const items = [
            ['*交通运输设备*机油', '桶', 2, '120.7699115044248', '241.54', '31.40'],
            ['*交通运输设备*机滤', '个', 1, '46.1946902654867', '46.19', '6.01'],
            ['*交通运输设备*空滤', '个', 1, '60', '60.00', '7.80'],
            ['*交通运输设备*空调滤', '个', 1, '50', '50.00', '6.50'],
            ['*洗涤剂*清洗剂', '桶', 2, '7.9646017699115', '15.93', '2.07'],
            ['*内燃机电器材*火花塞', '个', 6, '73.2743362831858', '439.65', '57.15'],
            ['*交通运输设备*发电机', '个', 1, '1852.212389380531', '1852.21', '240.79'],
            ['*交通运输设备*后桥上拉臂', '个', 1, '631.5929203539823', '631.59', '82.11'],
            ['*劳务*清洗节气门', '次', 1, '47.787610619469', '47.79', '6.21'],
            ['*劳务*补胎', '条', 1, '19.1150442477876', '19.12', '2.48'],
        ];
        byId('items').innerHTML = items.map(([name, unit, qty, price, amount, tax]) => `
            <tr><td class="p-0 whitespace-nowrap">${name}</td><td></td><td class="p-0 text-center">${unit}</td><td class="p-0 text-right">${qty}</td><td class="p-0 text-right">${price}</td><td class="p-0 text-right">${amount}</td><td class="p-0 pl-[13px]">13%</td><td class="p-0 text-right">${tax}</td><td></td></tr>`).join('');

        // QR blocks
        document.querySelectorAll('[data-qr]').forEach((svg) => {
            let s = Number(svg.dataset.qr) * 7919, d = '';
            const finder = (x, y) => [[0, 0], [18, 0], [0, 18]].some(([a, b]) => x >= a - 1 && x <= a + 7 && y >= b - 1 && y <= b + 7);
            for (let y = 0; y < 25; y++) for (let x = 0; x < 25; x++) {
                s = (s * 1103515245 + 12345) % 2147483648;
                if (!finder(x, y) && s / 2147483648 > 0.45) d += `M${x} ${y}h1v1h-1z`;
            }
            [[0, 0], [18, 0], [0, 18]].forEach(([a, b]) => { d += `M${a} ${b}h7v7h-7zM${a + 1} ${b + 1}v5h5v-5zM${a + 2} ${b + 2}h3v3h-3z`; });
            svg.innerHTML = `<path d="${d}" fill="#111"/>`;
        });

        // Mongolian lettering on the left half of the seal
        let marks = '';
        for (let i = 0; i < 12; i++) {
            const long = i > 8 || i < 2;
            marks += `<path transform="rotate(${-158 + i * 13} 51 51)" d="M51 ${long ? 7 : 9}v${long ? 13 : 7}M51 10l3 2M51 12l-2 2M49 ${long ? 19 : 16}h4"/>`;
        }
        byId('script').innerHTML = marks;
    </script>
</body>
</html>
